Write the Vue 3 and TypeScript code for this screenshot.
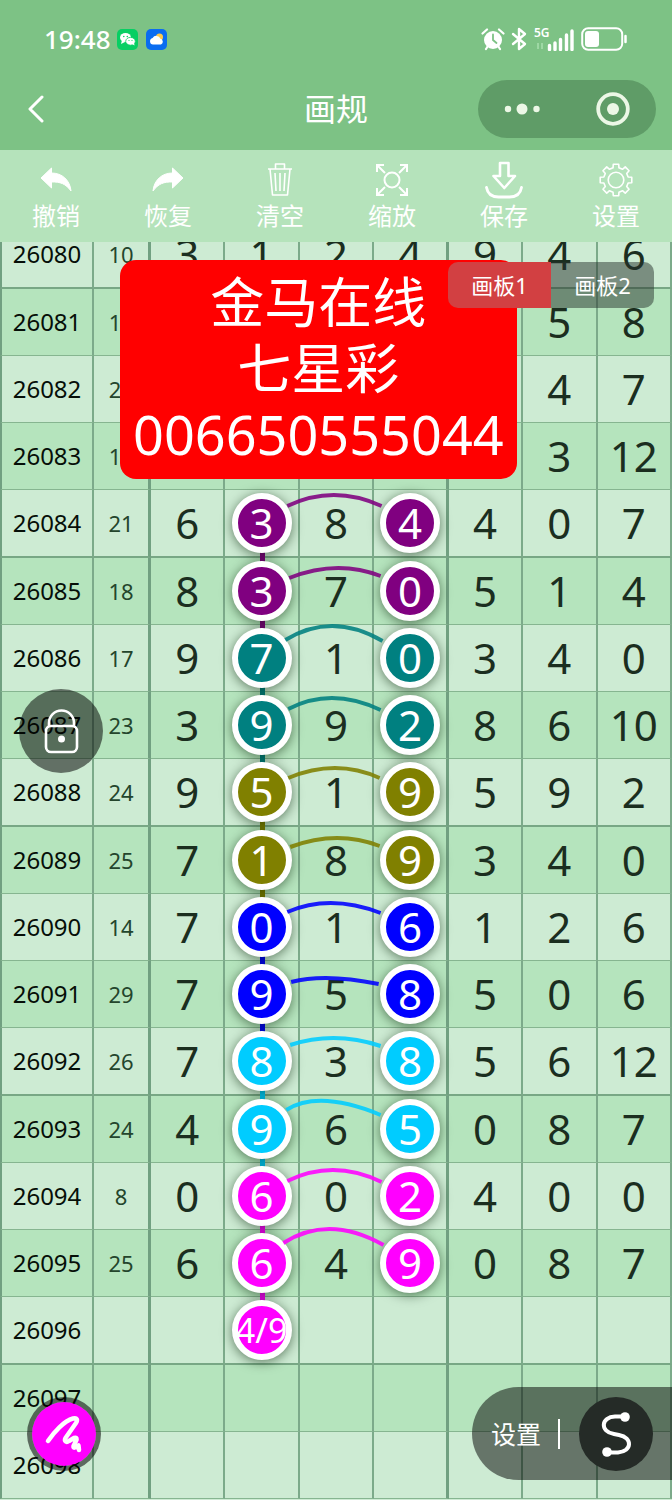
<script setup lang="ts">
import { ref } from 'vue'

interface Arc {
  left: [number, number]
  peak: [number, number]
  right: [number, number]
}

interface Draw {
  issue: string
  sum: string
  digits: string[]
  tone?: string
  picks?: number[]
  arc?: Arc
  linked?: boolean
}

// Arc points are relative to the row: x from the first ball's centre, y from the row's centre.
function arc(lx: number, ly: number, px: number, py: number, rx: number, ry: number): Arc {
  return { left: [lx, ly], peak: [px, py], right: [rx, ry] }
}

function row(issue: string, sum: string, digits: string, tone = '', a?: Arc): Draw {
  const list = digits ? digits.split(' ') : ['', '', '', '', '', '', '']
  return { issue, sum, digits: list, tone, picks: tone ? [1, 3] : [], arc: a, linked: !!tone }
}

const draws: Draw[] = [
  row('26080', '10', '3 1 2 4 9 4 6'),
  { issue: '26081', sum: '1', digits: ['', '', '', '', '', '5', '8'] },
  { issue: '26082', sum: '2', digits: ['', '', '', '', '', '4', '7'] },
  { issue: '26083', sum: '1', digits: ['', '', '', '', '', '3', '12'] },
  row('26084', '21', '6 3 8 4 4 0 7', 'purple', arc(26, -17, 74, -28, 123, -17)),
  row('26085', '18', '8 3 7 0 5 1 4', 'purple', arc(28, -13, 76, -23, 122, -15)),
  row('26086', '17', '9 7 1 0 3 4 0', 'teal', arc(24, -18, 73, -32, 124, -17)),
  row('26087', '23', '3 9 9 2 8 6 10', 'teal', arc(27, -16, 73, -27, 122, -15)),
  row('26088', '24', '9 5 1 9 5 9 2', 'olive', arc(27, -14, 75, -24, 121, -14)),
  row('26089', '25', '7 1 8 9 3 4 0', 'olive', arc(29, -13, 76, -22, 121, -14)),
  row('26090', '14', '7 0 1 6 1 2 6', 'blue', arc(26, -15, 72, -24, 122, -14)),
  row('26091', '29', '7 9 5 8 5 0 6', 'blue', arc(30, -12, 70, -16, 120, -10)),
  row('26092', '26', '7 8 3 8 5 6 12', 'cyan', arc(29, -16, 75, -23, 122, -15)),
  row('26093', '24', '4 9 6 5 0 8 7', 'cyan', arc(25, -19, 66, -28, 122, -14)),
  row('26094', '8', '0 6 0 2 4 0 0', 'magenta', arc(26, -15, 74, -26, 123, -14)),
  row('26095', '25', '6 6 4 9 0 8 7', 'magenta', arc(22, -20, 71, -34, 125, -18)),
  {
    issue: '26096',
    sum: '',
    digits: ['', '4/9', '', '', '', '', ''],
    tone: 'magenta',
    picks: [1],
  },
  row('26097', '', ''),
  row('26098', '', ''),
]

function arcPath(a: Arc): string {
  const mid = 33
  const cx = 2 * a.peak[0] - (a.left[0] + a.right[0]) / 2
  const cy = 2 * a.peak[1] - (a.left[1] + a.right[1]) / 2
  return `M${a.left[0]} ${mid + a.left[1]} Q${cx} ${mid + cy} ${a.right[0]} ${mid + a.right[1]}`
}

function gearPath(): string {
  const points: string[] = []
  for (let i = 0; i < 8; i++) {
    const base = (i * Math.PI) / 4 - Math.PI / 2
    const corners: [number, number][] = [
      [-0.24, 12.5],
      [-0.17, 16],
      [0.17, 16],
      [0.24, 12.5],
    ]
    for (const [da, r] of corners) {
      const x = 20 + r * Math.cos(base + da)
      const y = 20 + r * Math.sin(base + da)
      points.push(`${x.toFixed(2)} ${y.toFixed(2)}`)
    }
  }
  return `M${points.join('L')}Z`
}

const tools = [
  { id: 'undo', label: '撤销' },
  { id: 'redo', label: '恢复' },
  { id: 'clear', label: '清空' },
  { id: 'zoom', label: '缩放' },
  { id: 'save', label: '保存' },
  { id: 'config', label: '设置' },
]

const boards = ['画板1', '画板2']
const activeBoard = ref(0)
</script>

<template>
  <div class="screen">
    <header class="header">
      <div class="status">
        <span class="clock">19:48</span>
        <svg class="app-icon" viewBox="0 0 21 21" aria-hidden="true">
          <rect width="21" height="21" rx="5" fill="#07cf63" />
          <ellipse cx="8.5" cy="8.5" rx="5.5" ry="4.5" fill="#fff" />
          <path d="M5 11l-1 4 4-2z" fill="#fff" />
          <ellipse cx="13.5" cy="12.3" rx="4.8" ry="3.9" fill="#fff" stroke="#07cf63" stroke-width=".8" />
          <path d="M15 15l2.500 1.600-.5-3z" fill="#fff" />
          <circle cx="6.800" cy="7.500" r=".8" fill="#07cf63" />
          <circle cx="10.300" cy="7.500" r=".8" fill="#07cf63" />
          <circle cx="12" cy="11.500" r=".6" fill="#07cf63" />
          <circle cx="15" cy="11.500" r=".6" fill="#07cf63" />
        </svg>
        <svg class="app-icon weather" viewBox="0 0 21 21" aria-hidden="true">
          <rect width="21" height="21" rx="5" fill="#0a6cf0" />
          <circle cx="13.500" cy="8" r="3.500" fill="#ffc84a" />
          <path d="M7 15.500a3.300 3.300 0 0 1-.4-6.500 4.300 4.300 0 0 1 7.800.8 3 3 0 0 1 .6 5.700z" fill="#fff" />
        </svg>
        <span class="spacer"></span>
        <svg class="alarm" viewBox="0 0 24 24" aria-hidden="true">
          <circle cx="12" cy="13" r="9" fill="#fff" />
          <path d="M1.500 6.500L6 2.500M22.500 6.500L18 2.500M5 22l2-3M19 22l-2-3" stroke="#fff" stroke-width="2.200" stroke-linecap="round" />
          <path d="M12 7.500V13l3.500 3" fill="none" stroke="#7dc285" stroke-width="1.800" stroke-linecap="round" />
        </svg>
        <svg class="bluetooth" viewBox="0 0 16 24" aria-hidden="true">
          <path d="M2 7l12 10-6 5V2l6 5L2 17" fill="none" stroke="#fff" stroke-width="2.400" stroke-linejoin="round" stroke-linecap="round" />
        </svg>
        <span class="signal">
          <span class="net">5G</span>
          <svg class="bars" viewBox="0 0 38 22" aria-hidden="true">
            <path d="M2 14v6M6 14v6" stroke="#b4e6ba" stroke-width="1.200" />
            <path d="M13.500 16.500v4M19 14v6.500M24.500 10.500v10M30.500 6v14.500M36 2v18.500" stroke="#fff" stroke-width="3.400" stroke-linecap="round" />
          </svg>
        </span>
        <svg class="battery" viewBox="0 0 47 24" aria-hidden="true">
          <rect x="1.200" y="1.200" width="40" height="21.500" rx="6" fill="none" stroke="#fff" stroke-width="2" />
          <rect x="4" y="4" width="14" height="16" rx="3" fill="#fff" />
          <path d="M44.500 9v6" stroke="#fff" stroke-width="2.500" stroke-linecap="round" />
        </svg>
      </div>
      <nav class="nav">
        <button class="back" type="button" aria-label="返回">
          <svg viewBox="0 0 16 28" aria-hidden="true">
            <path d="M14 2L2 14l12 12" fill="none" stroke="#fff" stroke-width="3" stroke-linecap="round" stroke-linejoin="round" />
          </svg>
        </button>
        <h1 class="title">画规</h1>
        <div class="capsule">
          <button type="button" aria-label="更多">
            <svg viewBox="0 0 40 40" aria-hidden="true">
              <g fill="#ecf7e6">
                <circle cx="5" cy="20" r="3.200" />
                <circle cx="19" cy="20" r="5.500" />
                <circle cx="33.500" cy="20" r="3.200" />
              </g>
            </svg>
          </button>
          <button type="button" aria-label="关闭">
            <svg viewBox="0 0 40 40" aria-hidden="true">
              <circle cx="21" cy="20" r="14.800" fill="none" stroke="#ecf7e6" stroke-width="3.800" />
              <circle cx="21" cy="20" r="6" fill="#ecf7e6" />
            </svg>
          </button>
        </div>
      </nav>
    </header>

    <div class="toolbar">
      <button v-for="tool in tools" :key="tool.id" class="tool" type="button">
        <svg viewBox="0 0 40 40" fill="none" stroke="#fff" stroke-linejoin="round" aria-hidden="true">
          <path v-if="tool.id === 'undo'" d="M15.500 8L5 18l10.500 10v-6C24 21.500 30 24 35 31 34 20 26 13 15.500 13z" fill="#fff" stroke="#fff" />
          <path v-else-if="tool.id === 'redo'" d="M24.500 8L35 18 24.500 28v-6C16 21.500 10 24 5 31 6 20 14 13 24.500 13z" fill="#fff" stroke="#fff" />
          <path v-else-if="tool.id === 'clear'" d="M8 9h24M15.500 9V4h9v5M10 9l2.500 26h15L30 9M15 13l1 18M20 13v18M25 13l-1 18" stroke-width="1.600" />
          <template v-else-if="tool.id === 'zoom'">
            <circle cx="20" cy="20" r="7.500" stroke-width="2" />
            <path d="M5 12V5h7M5 5l8 8M28 5h7v7M35 5l-8 8M5 28v7h7M5 35l8-8M35 28v7h-7M35 35l-8-8" stroke-width="2" stroke-linejoin="miter" />
          </template>
          <template v-else-if="tool.id === 'save'">
            <path d="M16 3h8.500v13H31L20.300 28 9.500 16H16z" stroke-width="2.600" />
            <path d="M2.500 27.500c1 6 5 9.500 12 9.500h11c7 0 11-3.500 12-9.500" stroke-width="2.800" stroke-linecap="round" />
          </template>
          <template v-else>
            <path :d="gearPath()" stroke-width="1.600" />
            <circle cx="20" cy="20" r="7.800" stroke-width="1.600" />
          </template>
        </svg>
        <span>{{ tool.label }}</span>
      </button>
    </div>

    <main class="chart">
      <table class="grid">
        <colgroup>
          <col class="col-issue" />
          <col class="col-sum" />
          <col v-for="n in 7" :key="n" />
        </colgroup>
        <tbody>
          <tr v-for="draw in draws" :key="draw.issue">
            <th scope="row">{{ draw.issue }}</th>
            <td class="sum"><span :class="{ partial: draw.sum.length === 1 && !draw.tone }">{{ draw.sum }}</span></td>
            <td v-for="(digit, i) in draw.digits" :key="i" class="digit" :class="draw.tone">
              <template v-if="draw.picks?.includes(i)">
                <svg v-if="i === 1 && draw.arc" class="arc" viewBox="0 0 149 66" preserveAspectRatio="none" aria-hidden="true">
                  <path :d="arcPath(draw.arc)" />
                </svg>
                <span v-if="i === 1 && draw.linked" class="link"></span>
                <span class="ball" :class="{ small: digit.length > 1 }">{{ digit }}</span>
              </template>
              <template v-else>{{ digit }}</template>
            </td>
          </tr>
        </tbody>
      </table>

      <div class="banner">
        <p>金马在线</p>
        <p>七星彩</p>
        <p>006650555044</p>
      </div>

      <div class="boards">
        <button
          v-for="(board, i) in boards"
          :key="board"
          type="button"
          :class="{ active: activeBoard === i }"
          :aria-pressed="activeBoard === i"
          @click="activeBoard = i"
        >
          {{ board }}
        </button>
      </div>

      <button class="lock" type="button" aria-label="锁定">
        <svg viewBox="0 0 84 84" fill="none" stroke="#fff" stroke-width="2.600" aria-hidden="true">
          <rect x="27" y="37" width="31" height="26" rx="5" />
          <path d="M30 37V34a12.500 12.500 0 0 1 25 0v3" />
          <circle cx="42.500" cy="50" r="3.500" fill="#fff" stroke="none" />
        </svg>
      </button>

      <button class="pen" type="button" aria-label="画笔">
        <svg viewBox="0 0 74 74" fill="none" stroke="#fff" stroke-width="4.500" stroke-linecap="round" stroke-linejoin="round" aria-hidden="true">
          <path d="M21 44C27 35 37 24 46 21.500c4-1 5 1 3 4.500L38.500 41c-1.500 3 .5 5 3.500 3l5-3c3-1 3 1 2 3l-2.500 5c-.5 2.500 1.500 2 5-.5l.5 4.500" />
        </svg>
      </button>

      <div class="dock">
        <button class="dock-label" type="button">设置</button>
        <span class="divider"></span>
        <button class="curve" type="button" aria-label="曲线">
          <svg viewBox="0 0 74 74" fill="none" stroke="#fff" stroke-width="4" stroke-linecap="round" aria-hidden="true">
            <path d="M46 19.500H36c-14 .5-15.500 15-1 17.500l5 1c14 2.500 13 16.500-1 17.500H28" />
            <circle cx="46" cy="20" r="4.800" fill="#fff" stroke="none" />
            <circle cx="28" cy="55" r="4.800" fill="#fff" stroke="none" />
          </svg>
        </button>
      </div>
    </main>
  </div>
</template>

<style>
body {
  margin: 0;
  background: #cdebd3;
}
</style>

<style scoped>
.screen {
  font-family: "Noto Sans", "Noto Sans CJK SC", sans-serif;
  color: #fff;
  overflow: hidden;
}

button {
  margin: 0;
  padding: 0;
  border: 0;
  background: none;
  color: inherit;
  font: inherit;
  cursor: pointer;
}

svg {
  display: block;
}

.header {
  background: #7dc285;
  padding-bottom: 10px;
}

.status {
  display: flex;
  align-items: center;
  height: 78px;
  padding: 0 44px;
}

.clock {
  font-size: 26px;
  font-weight: 500;
  line-height: 32px;
}

.app-icon {
  width: 21px;
  height: 21px;
  margin-left: 6px;
}

.weather {
  margin-left: 8px;
}

.spacer {
  flex: 1;
}

.alarm {
  width: 24px;
  height: 24px;
}

.bluetooth {
  width: 16px;
  height: 24px;
  margin-left: 6px;
}

.signal {
  position: relative;
  width: 40px;
  height: 24px;
  margin: 0 7px;
}

.net {
  position: absolute;
  left: 0;
  top: 0;
  font-size: 12px;
  font-weight: 600;
  line-height: 12px;
}

.bars {
  position: absolute;
  right: 0;
  bottom: 0;
  width: 38px;
  height: 22px;
}

.battery {
  width: 47px;
  height: 24px;
}

.nav {
  display: grid;
  grid-template-columns: 1fr auto 1fr;
  align-items: center;
  height: 62px;
  padding: 0 16px;
}

.back {
  width: 16px;
  height: 28px;
  margin-left: 12px;
}

.back svg {
  width: 16px;
  height: 28px;
}

.title {
  margin: 0;
  font-size: 32px;
  font-weight: 400;
  line-height: 40px;
}

.capsule {
  justify-self: end;
  display: flex;
  width: 178px;
  height: 58px;
  border-radius: 29px;
  background: #5f9c67;
}

.capsule button {
  flex: 1;
  display: flex;
  align-items: center;
  justify-content: center;
}

.capsule svg {
  width: 40px;
  height: 40px;
}

.toolbar {
  display: grid;
  grid-template-columns: repeat(6, 1fr);
  height: 92px;
  background: #b5e3bb;
}

.tool {
  display: flex;
  flex-direction: column;
  align-items: center;
  padding-top: 10px;
  font-size: 24px;
  line-height: 32px;
}

.tool svg {
  width: 40px;
  height: 40px;
}

.chart {
  position: relative;
  display: flow-root;
  overflow: hidden;
  color: #1b2e1f;
}

.grid {
  width: 100%;
  margin-top: -21px;
  table-layout: fixed;
  border-collapse: separate;
  border-spacing: 0;
}

.col-issue {
  width: 94px;
}

.col-sum {
  width: 57px;
}

th,
td {
  box-sizing: border-box;
  position: relative;
  height: 67px;
  padding: 0;
  border-right: 2px solid #7caa8a;
  border-bottom: 1px solid #86b590;
  text-align: center;
  vertical-align: middle;
}

th {
  border-left: 2px solid #71a081;
  color: #060f08;
  font-size: 24px;
  font-weight: 400;
  line-height: 32px;
}

.sum {
  border-right-width: 3px;
  border-right-color: #71a081;
  color: #24452c;
  font-size: 22px;
  line-height: 32px;
}

.partial {
  padding-right: 12px;
}

.digit {
  font-size: 42px;
  line-height: 60px;
}

.digit:nth-child(6) {
  border-right-width: 3px;
  border-right-color: #71a081;
}

tr {
  background: #cdebd3;
}

tr:nth-child(even) {
  background: #b5e4bd;
}

tr:nth-child(4n + 1) > * {
  height: 68px;
  border-bottom-width: 2px;
  border-bottom-color: #78a785;
}

.purple { --tone: #800080; }
.teal { --tone: #008080; }
.olive { --tone: #808000; }
.blue { --tone: #0000ff; }
.cyan { --tone: #00ccff; }
.magenta { --tone: #ff00ff; }

.ball {
  box-sizing: border-box;
  position: relative;
  z-index: 1;
  display: flex;
  align-items: center;
  justify-content: center;
  width: 60px;
  height: 60px;
  margin: 0 auto;
  border: 6px solid #fff;
  border-radius: 50%;
  background: var(--tone);
  box-shadow: 0 2px 12px rgba(0, 30, 0, 0.55);
  color: #fff;
  line-height: 48px;
}

.small {
  font-size: 34px;
}

.arc {
  position: absolute;
  z-index: 2;
  left: 50%;
  top: 0;
  width: 200%;
  height: 100%;
  overflow: visible;
  pointer-events: none;
}

.arc path {
  fill: none;
  stroke: var(--tone);
  stroke-width: 4;
  opacity: 0.88;
}

.link {
  position: absolute;
  left: 50%;
  top: 50%;
  width: 5px;
  height: 100%;
  margin-left: -2px;
  background: var(--tone);
}

.banner {
  position: absolute;
  z-index: 3;
  top: 18px;
  left: 120px;
  padding: 9px 13px 12px;
  border-radius: 16px;
  background: #ff0000;
  color: #fff;
  font-size: 54px;
  line-height: 66px;
  text-align: center;
}

.banner p {
  margin: 0;
}

.boards {
  position: absolute;
  z-index: 4;
  top: 20px;
  right: 18px;
  display: flex;
  overflow: hidden;
  border-radius: 10px;
  color: #fff;
}

.boards button {
  width: 103px;
  height: 46px;
  background: rgba(40, 50, 45, 0.5);
  font-size: 22px;
  line-height: 32px;
}

.boards .active {
  background: #d24042;
}

.lock,
.pen {
  position: absolute;
  z-index: 4;
  border-radius: 50%;
}

.lock {
  left: 19px;
  top: 447px;
  width: 84px;
  height: 84px;
  background: rgba(0, 0, 0, 0.52);
}

.pen {
  left: 27px;
  bottom: 28px;
  box-sizing: border-box;
  width: 74px;
  height: 74px;
  border: 5px solid rgba(0, 0, 0, 0.55);
  background: #ff00ff;
  background-clip: padding-box;
}

.pen svg {
  width: 74px;
  height: 74px;
  margin: -5px;
}

.dock {
  position: absolute;
  z-index: 4;
  right: 0;
  bottom: 19px;
  box-sizing: border-box;
  display: flex;
  align-items: center;
  height: 93px;
  padding: 0 19px;
  border-radius: 47px 0 0 47px;
  background: rgba(0, 0, 0, 0.5);
  color: #fff;
}

.dock-label {
  font-size: 25px;
  line-height: 32px;
}

.divider {
  width: 2px;
  height: 30px;
  margin: 0 19px 0 17px;
  background: #fff;
}

.curve {
  width: 74px;
  height: 74px;
  border-radius: 50%;
  background: #252b27;
}
</style>
